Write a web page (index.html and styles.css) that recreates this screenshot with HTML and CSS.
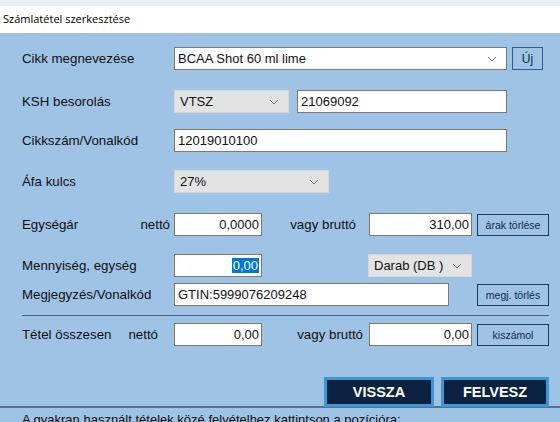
FILE: index.html
```html
<!DOCTYPE html>
<html>
<head>
    <meta charset="UTF-8">
    <title>Számlatétel szerkesztése</title>
    <link rel="stylesheet" href="styles.css">
</head>
<body>
    <div class="chrome"></div>
    <div class="titlebar">Számlatétel szerkesztése</div>

    <div class="panel">
        <div class="row r-name">
            <span class="label">Cikk megnevezése</span>
            <div class="combo w-name">
                <span>BCAA Shot 60 ml lime</span>
                <svg class="chev" width="10" height="6" viewBox="0 0 10 6"><polyline points="1,1 5,5 9,1"/></svg>
            </div>
            <button class="btn-small btn-new">Új</button>
        </div>

        <div class="row r-ksh">
            <span class="label">KSH besorolás</span>
            <div class="select w-ksh">
                <span>VTSZ</span>
                <svg class="chev" width="10" height="6" viewBox="0 0 10 6"><polyline points="1,1 5,5 9,1"/></svg>
            </div>
            <div class="field w-kshcode">21069092</div>
        </div>

        <div class="row r-code">
            <span class="label">Cikkszám/Vonalkód</span>
            <div class="field w-code">12019010100</div>
        </div>

        <div class="row r-vat">
            <span class="label">Áfa kulcs</span>
            <div class="select w-vat">
                <span>27%</span>
                <svg class="chev" width="10" height="6" viewBox="0 0 10 6"><polyline points="1,1 5,5 9,1"/></svg>
            </div>
        </div>

        <div class="row r-price">
            <span class="label split"><span>Egységár</span><span>nettó</span></span>
            <div class="field num w-num">0,0000</div>
            <span class="gross">vagy bruttó</span>
            <div class="field num w-gross">310,00</div>
            <button class="btn-small btn-side">árak törlése</button>
        </div>

        <div class="row r-qty">
            <span class="label">Mennyiség, egység</span>
            <div class="field num w-num"><span class="sel">0,00</span></div>
            <div class="select w-unit">
                <span>Darab (DB )</span>
                <svg class="chev" width="10" height="6" viewBox="0 0 10 6"><polyline points="1,1 5,5 9,1"/></svg>
            </div>
        </div>

        <div class="row r-note">
            <span class="label">Megjegyzés/Vonalkód</span>
            <div class="field w-note">GTIN:5999076209248</div>
            <button class="btn-small btn-side">megj. törlés</button>
        </div>

        <hr class="sep">

        <div class="row r-total">
            <span class="label split"><span>Tétel összesen</span><span class="net">nettó</span></span>
            <div class="field num w-num">0,00</div>
            <span class="gross tight">vagy bruttó</span>
            <div class="field num w-gross">0,00</div>
            <button class="btn-small btn-side">kiszámol</button>
        </div>

        <div class="actions">
            <button class="btn-big btn-back">VISSZA</button>
            <button class="btn-big btn-add">FELVESZ</button>
        </div>

        <p class="hint">A gyakran használt tételek közé felvételhez kattintson a pozícióra:</p>
    </div>
    <div class="listtop"></div>
</body>
</html>
```

FILE: styles.css
```css
body {
    margin: 0;
    width: 560px;
    height: 422px;
    overflow: hidden;
    background-color: #9fc3e5;
    font-family: "Liberation Sans", Arial, sans-serif;
    color: #111;
}

.chrome {
    height: 6px;
    background-color: #e9eef3;
}

.titlebar {
    height: 27px;
    line-height: 26px;
    padding-left: 3px;
    background-color: #ffffff;
    font-family: "Open Sans", "Noto Sans", sans-serif;
    font-size: 11px;
    color: #000;
}

.panel {
    padding: 14px 0 0 22px;
    height: 373px;
    box-sizing: border-box;
}

.row {
    display: flex;
    align-items: center;
    height: 23px;
}

.r-ksh { margin-top: 20px; }
.r-code { margin-top: 16px; }
.r-vat { margin-top: 18px; }
.r-price { margin-top: 20px; }
.r-qty { margin-top: 18px; }
.r-note { margin-top: 6px; }

.label {
    width: 152px;
    flex-shrink: 0;
    font-size: 13.3px;
}

.label.split {
    display: flex;
    justify-content: space-between;
    padding-right: 4px;
    box-sizing: border-box;
}

.label .net {
    margin-right: 12px;
}

.field,
.combo,
.select {
    height: 23px;
    box-sizing: border-box;
    font-size: 13px;
    display: flex;
    align-items: center;
}

.field,
.combo {
    background-color: #ffffff;
    border: 1px solid #7a7a7a;
    padding: 0 3px;
}

.field.num {
    justify-content: flex-end;
    padding-right: 2px;
}

.sel {
    background-color: #0078d7;
    color: #ffffff;
    padding: 0 1px;
}

.combo,
.select {
    justify-content: space-between;
    padding-right: 9px;
}

.select {
    background-color: #e3e3e3;
    border: 1px solid #d6d6d6;
    padding-left: 5px;
}

.chev {
    fill: none;
    stroke: #6f6f6f;
    stroke-width: 1;
}

.w-name { width: 333px; }
.w-ksh { width: 115px; }
.w-kshcode { width: 210px; margin-left: 8px; }
.w-code { width: 333px; }
.w-vat { width: 155px; }
.w-num { width: 88px; }
.w-gross { width: 103px; }
.w-unit { width: 104px; margin-left: 106px; }
.w-note { width: 275px; }

.gross {
    width: 107px;
    text-align: right;
    padding-right: 13px;
    box-sizing: border-box;
    font-size: 13.3px;
}

.gross.tight {
    padding-right: 6px;
}

.btn-small {
    height: 22px;
    box-sizing: border-box;
    border: 1px solid #1f3a58;
    background-color: #9fc3e5;
    color: #0f2a4a;
    font-family: "Liberation Sans", Arial, sans-serif;
    font-size: 10.5px;
    padding: 0;
}

.btn-new {
    width: 31px;
    height: 23px;
    margin-left: 5px;
    font-size: 12px;
    border-color: #2c5f8e;
}

.btn-side {
    width: 72px;
    margin-left: 5px;
}

.r-note .btn-side {
    margin-left: 28px;
}

.sep {
    margin: 9px 11px 0 0;
    border: none;
    border-top: 1px solid #4d5f73;
    height: 0;
}

.r-total {
    margin-top: 7px;
}

.actions {
    display: flex;
    justify-content: flex-end;
    gap: 7px;
    margin-top: 31px;
    margin-right: 11px;
}

.btn-big {
    height: 30px;
    box-sizing: border-box;
    background-color: #0b2341;
    border: 3px solid #3d97d2;
    color: #ffffff;
    font-family: "Liberation Sans", Arial, sans-serif;
    font-weight: bold;
    font-size: 14.5px;
    padding: 0;
}

.btn-back { width: 110px; }
.btn-add { width: 108px; }

.hint {
    margin: 5px 0 0;
    font-size: 13px;
    white-space: nowrap;
}

.listtop {
    height: 2px;
    background-color: #5b7089;
}
```
